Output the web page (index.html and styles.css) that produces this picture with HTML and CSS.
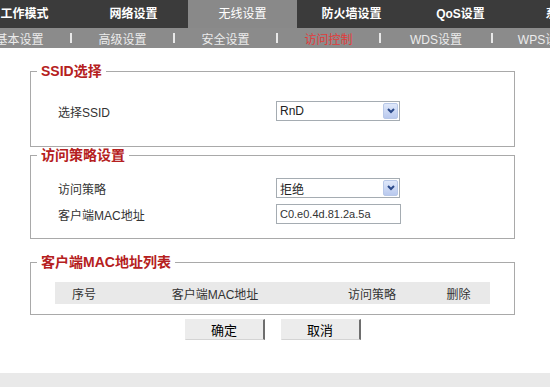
FILE: index.html
```html
<!DOCTYPE html>
<html lang="zh-CN">
<head>
<meta charset="UTF-8">
<title>访问控制</title>
<link rel="stylesheet" href="styles.css">
</head>
<body>
<div class="topnav">
  <div class="tab">工作模式</div>
  <div class="tab">网络设置</div>
  <div class="tab active">无线设置</div>
  <div class="tab">防火墙设置</div>
  <div class="tab">QoS设置</div>
  <div class="tab">系统工具</div>
</div>
<div class="subnav">
  <div class="sub">基本设置</div><span class="sep"></span>
  <div class="sub">高级设置</div><span class="sep"></span>
  <div class="sub">安全设置</div><span class="sep"></span>
  <div class="sub current">访问控制</div><span class="sep"></span>
  <div class="sub wide">WDS设置</div><span class="sep"></span>
  <div class="sub">WPS设置</div>
</div>

<div class="content">
  <fieldset class="box box-ssid">
    <legend>SSID选择</legend>
    <div class="row">
      <label>选择SSID</label>
      <div class="select"><span>RnD</span><span class="arrow"><svg width="8" height="6" viewBox="0 0 8 6"><path d="M1 1 L4 4 L7 1" fill="none" stroke="#2b4a8a" stroke-width="2"/></svg></span></div>
    </div>
  </fieldset>

  <fieldset class="box box-policy">
    <legend>访问策略设置</legend>
    <div class="row">
      <label>访问策略</label>
      <div class="select"><span>拒绝</span><span class="arrow"><svg width="8" height="6" viewBox="0 0 8 6"><path d="M1 1 L4 4 L7 1" fill="none" stroke="#2b4a8a" stroke-width="2"/></svg></span></div>
    </div>
    <div class="row">
      <label>客户端MAC地址</label>
      <div class="input">C0.e0.4d.81.2a.5a</div>
    </div>
  </fieldset>

  <fieldset class="box box-list">
    <legend>客户端MAC地址列表</legend>
    <table class="maclist">
      <tr>
        <th class="c1">序号</th>
        <th class="c2">客户端MAC地址</th>
        <th class="c3">访问策略</th>
        <th class="c4">删除</th>
      </tr>
    </table>
  </fieldset>

  <div class="buttons">
    <button class="btn">确定</button>
    <button class="btn">取消</button>
  </div>
</div>
<div class="footer"></div>
</body>
</html>
```

FILE: styles.css
```css
body {
  margin: 0;
  font-family: "Liberation Sans", "Noto Sans CJK SC", sans-serif;
  font-size: 12px;
  color: #222;
  background: #fff;
  overflow: hidden;
}

.topnav {
  display: flex;
  height: 28px;
  background-color: #3b3b3b;
  margin-left: -30px;
  white-space: nowrap;
}

.tab {
  flex: 0 0 109px;
  text-align: center;
  line-height: 28px;
  color: #fff;
  font-weight: bold;
  font-size: 12px;
}

.tab.active {
  background-color: #898989;
  font-weight: normal;
}

.subnav {
  display: flex;
  align-items: center;
  height: 20px;
  background-color: #8b8b8b;
  margin-left: -31px;
  white-space: nowrap;
}

.sub {
  flex: 0 0 101px;
  text-align: center;
  color: #ececec;
  font-size: 12px;
}

.sub.wide {
  flex-basis: 110px;
}

.sub.current {
  color: #e23a3a;
}

.sep {
  flex: 0 0 2px;
  height: 10px;
  background-color: #e8e8e8;
}

.content {
  padding-top: 15px;
  height: 310px;
}

.box {
  margin: 0 0 0 30px;
  width: 485px;
  box-sizing: border-box;
  border: 1px solid #a9a9a9;
  padding: 0;
  min-width: 0;
}

.box legend {
  margin-left: 6px;
  padding: 0 4px;
  font-size: 14px;
  line-height: 16px;
  font-weight: bold;
  color: #b52020;
}

.box-ssid {
  padding: 22px 0 25px 0;
}

.box-policy {
  padding: 15px 0 14px 0;
}

.box-list {
  margin-top: 15px;
  padding: 12px 0 10px 0;
}

.row {
  display: flex;
  align-items: center;
  height: 20px;
  padding-left: 27px;
}

.row + .row {
  margin-top: 6px;
}

.row label {
  width: 218px;
  color: #333;
}

.select {
  display: flex;
  align-items: center;
  justify-content: space-between;
  width: 124px;
  height: 20px;
  box-sizing: border-box;
  border: 1px solid #a5acb2;
  padding: 0 1px 0 3px;
  background: #fff;
}

.arrow {
  display: flex;
  align-items: center;
  justify-content: center;
  width: 15px;
  height: 16px;
  border: 1px solid #b8c8e8;
  border-radius: 2px;
  box-sizing: border-box;
  background: linear-gradient(#dfe8fa, #b9c9ee);
}

.input {
  width: 125px;
  height: 20px;
  box-sizing: border-box;
  border: 1px solid #a5acb2;
  padding: 0 3px;
  line-height: 18px;
  font-size: 11px;
  color: #333;
}

.maclist {
  width: 435px;
  margin: 0 auto;
  border-collapse: collapse;
  background-color: #e9e9e9;
}

.maclist th {
  height: 22px;
  padding: 0;
  font-weight: normal;
  color: #333;
  text-align: center;
}

.c1 { width: 58px; }
.c2 { width: 204px; }
.c3 { width: 110px; }
.c4 { width: 63px; }

.buttons {
  display: flex;
  justify-content: center;
  gap: 16px;
  margin-left: 30px;
  width: 485px;
  margin-top: 4px;
}

.btn {
  width: 80px;
  height: 21px;
  padding: 0;
  background-color: #ececec;
  border: 1px solid #ececec;
  border-right: 2px solid #6e6e6e;
  border-bottom-color: #d4d4d4;
  font-family: "Noto Sans CJK SC", sans-serif;
  font-size: 13px;
  color: #000;
}

.footer {
  height: 14px;
  background-color: #e9e9e9;
}
```
